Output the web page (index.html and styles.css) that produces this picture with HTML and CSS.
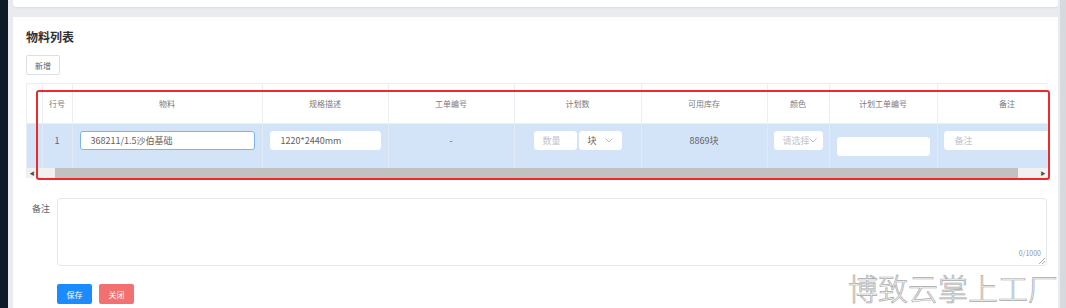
FILE: index.html
```html
<!DOCTYPE html>
<html lang="zh-CN">
<head>
    <meta charset="UTF-8">
    <title>物料列表</title>
    <link rel="stylesheet" href="styles.css">
</head>
<body>
    <div class="app">
        <aside class="sidebar"></aside>
        <main class="main">
            <div class="top-card"></div>
            <section class="card">
                <h2 class="title">物料列表</h2>
                <button class="btn-plain">新增</button>

                <div class="table-wrap">
                    <table class="grid">
                        <colgroup>
                            <col style="width:15px">
                            <col style="width:30px">
                            <col style="width:190px">
                            <col style="width:126px">
                            <col style="width:126px">
                            <col style="width:127px">
                            <col style="width:126px">
                            <col style="width:62px">
                            <col style="width:108px">
                            <col style="width:140px">
                        </colgroup>
                        <thead>
                            <tr>
                                <th></th>
                                <th>行号</th>
                                <th>物料</th>
                                <th>规格描述</th>
                                <th>工单编号</th>
                                <th>计划数</th>
                                <th>可用库存</th>
                                <th>颜色</th>
                                <th>计划工单编号</th>
                                <th>备注</th>
                            </tr>
                        </thead>
                        <tbody>
                            <tr class="current">
                                <td></td>
                                <td>1</td>
                                <td class="pad"><div class="input focus">368211/1.5沙伯基础</div></td>
                                <td class="pad"><div class="input">1220*2440mm</div></td>
                                <td>-</td>
                                <td>
                                    <div class="qty">
                                        <div class="input placeholder small">数量</div>
                                        <div class="input select small">块
                                            <svg width="8" height="5" viewBox="0 0 8 5"><polyline points="0.5,0.5 4,4 7.5,0.5" fill="none" stroke="#b4b8bf" stroke-width="0.9"/></svg>
                                        </div>
                                    </div>
                                </td>
                                <td>8869块</td>
                                <td class="pad-s">
                                    <div class="input select placeholder tight"><span class="clip">请选择</span>
                                        <svg width="8" height="5" viewBox="0 0 8 5"><polyline points="0.5,0.5 4,4 7.5,0.5" fill="none" stroke="#b4b8bf" stroke-width="0.9"/></svg>
                                    </div>
                                </td>
                                <td class="pad"><div class="input low"></div></td>
                                <td class="pad-s"><div class="input placeholder">备注</div></td>
                            </tr>
                        </tbody>
                    </table>
                    <div class="hscroll">
                        <span class="arrow">&#9664;</span>
                        <div class="track"><div class="thumb"></div></div>
                        <span class="arrow">&#9654;</span>
                    </div>
                </div>

                <div class="form-row">
                    <label class="form-label">备注</label>
                    <div class="textarea">
                        <span class="count">0/1000</span>
                        <svg class="grip" width="7" height="7" viewBox="0 0 7 7"><line x1="1" y1="7" x2="7" y2="1" stroke="#999" stroke-width="0.8"/><line x1="4" y1="7" x2="7" y2="4" stroke="#999" stroke-width="0.8"/></svg>
                    </div>
                </div>

                <div class="actions">
                    <button class="btn btn-primary">保存</button>
                    <button class="btn btn-danger">关闭</button>
                </div>

                <div class="mark"></div>
                <div class="watermark">博致云掌上工厂</div>
            </section>
        </main>
        <div class="vscroll"></div>
    </div>
</body>
</html>
```

FILE: styles.css
```css
* {
    box-sizing: border-box;
}

body {
    margin: 0;
    font-family: "Noto Sans CJK SC", "Noto Sans", sans-serif;
    background-color: #e9ebef;
    color: #606266;
    overflow: hidden;
}

.app {
    display: flex;
    height: 308px;
}

.sidebar {
    flex: 0 0 8px;
    background-color: #0e1a28;
}

.main {
    flex: 1;
    min-width: 0;
    padding: 0 2px 0 5px;
}

.vscroll {
    flex: 0 0 6px;
    background-color: #d6d9de;
}

.top-card {
    height: 7px;
    background: #fff;
    border-radius: 0 0 3px 3px;
    box-shadow: 0 1px 2px rgba(0, 0, 0, 0.06);
    margin-bottom: 10px;
}

.card {
    position: relative;
    background: #fff;
    height: 291px;
    padding: 13px 10px 0 13px;
}

.title {
    margin: 0 0 11px;
    font-size: 12px;
    line-height: 14px;
    font-weight: bold;
    color: #303133;
}

.btn-plain {
    display: block;
    width: 34px;
    height: 20px;
    padding: 0;
    font-family: inherit;
    font-size: 8px;
    color: #606266;
    background: #fff;
    border: 1px solid #dcdfe6;
    border-radius: 2px;
    margin-bottom: 8px;
}

.table-wrap {
    overflow: hidden;
    border-top: 1px solid #ebeef5;
    border-left: 1px solid #ebeef5;
}

.grid {
    table-layout: fixed;
    width: 1050px;
    border-collapse: collapse;
}

.grid th {
    height: 39px;
    font-size: 8px;
    font-weight: normal;
    color: #777b82;
    text-align: center;
    border-right: 1px solid #ebeef5;
    border-bottom: 1px solid #ebeef5;
    padding: 0;
}

.grid td {
    height: 45px;
    vertical-align: top;
    padding: 7px 0 0;
    font-size: 9px;
    line-height: 19px;
    text-align: center;
    color: #606266;
    border-right: 1px solid #e1eaf5;
}

.grid tr.current td {
    background-color: #d3e4f8;
}

.grid td.pad {
    padding-left: 7px;
    padding-right: 7px;
}

.grid td.pad-s {
    padding-left: 6px;
    padding-right: 6px;
}

.input {
    height: 19px;
    line-height: 17px;
    background: #fff;
    border: 1px solid #fff;
    border-radius: 3px;
    padding: 0 10px;
    font-size: 9px;
    color: #606266;
    text-align: left;
    white-space: nowrap;
    overflow: hidden;
}

.input.focus {
    border-color: #7fb3f0;
}

.input.placeholder {
    color: #c0c4cc;
}

.input.low {
    margin-top: 6px;
}

.qty {
    display: flex;
    justify-content: center;
    gap: 2px;
}

.input.small {
    width: 43px;
    padding: 0 8px;
}

.select {
    display: flex;
    align-items: center;
    justify-content: space-between;
}

.select.tight {
    padding: 0 5px 0 8px;
}

.clip {
    overflow: hidden;
    width: 26px;
}

.hscroll {
    display: flex;
    align-items: center;
    height: 10px;
    background-color: #f1f1f1;
}

.arrow {
    width: 10px;
    font-size: 5px;
    line-height: 10px;
    text-align: center;
    color: #505050;
}

.track {
    flex: 1;
    height: 10px;
    padding: 0 20px 0 18px;
}

.thumb {
    height: 10px;
    background-color: #c1c1c1;
}

.form-row {
    display: flex;
    margin-top: 20px;
}

.form-label {
    width: 31px;
    padding: 5px 7px 0 0;
    text-align: right;
    font-size: 9px;
    line-height: 12px;
    color: #606266;
}

.textarea {
    position: relative;
    width: 990px;
    height: 68px;
    border: 1px solid #e4e6ea;
    border-radius: 4px;
}

.count {
    position: absolute;
    right: 5px;
    bottom: 7px;
    font-size: 7px;
    color: #909399;
}

.grip {
    position: absolute;
    right: 1px;
    bottom: 1px;
}

.actions {
    display: flex;
    gap: 7px;
    margin: 18px 0 0 31px;
}

.btn {
    width: 35px;
    height: 20px;
    padding: 0;
    border: none;
    border-radius: 2px;
    font-family: inherit;
    font-size: 8px;
    color: #fff;
}

.btn-primary {
    background-color: #1a8cff;
}

.btn-danger {
    background-color: #f37070;
}

.mark {
    position: absolute;
    left: 23px;
    top: 73px;
    width: 1014px;
    height: 90px;
    border: 2px solid #f0282a;
    border-radius: 3px;
}

.watermark {
    position: absolute;
    right: 0;
    bottom: 5px;
    font-size: 30px;
    line-height: 32px;
    font-weight: 300;
    color: #fbfbfb;
    -webkit-text-stroke: 0.7px #a8a8a8;
}
```
